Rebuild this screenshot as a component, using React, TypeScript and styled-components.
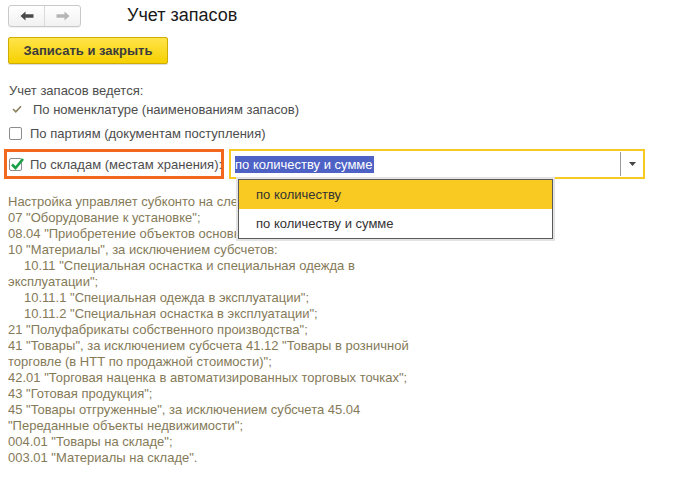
import React from "react";
import styled, { createGlobalStyle } from "styled-components";

const Global = createGlobalStyle`
  html, body { margin: 0; padding: 0; background: #fff; }
  body { font-family: "Liberation Sans", Arial, sans-serif; font-size: 13px; color: #4d4d4d; }
`;

const Page = styled.div`
  display: flex;
  flex-direction: column;
  padding: 4px 0 0 8px;
  width: 692px;
  height: 479px;
  box-sizing: border-box;
`;

const Header = styled.div`
  display: flex;
  align-items: center;
  height: 23px;
`;

const NavGroup = styled.div`
  display: flex;
  width: 73px;
  height: 22px;
  box-sizing: border-box;
  border: 1px solid #c9c9c9;
  border-radius: 3px;
  background: linear-gradient(#ffffff, #f1f1f1);
  box-shadow: 0 1px 1px rgba(0, 0, 0, 0.06);
`;

const NavButton = styled.div<{ $divider?: boolean }>`
  flex: 1;
  display: flex;
  align-items: center;
  justify-content: center;
  border-left: ${(p) => (p.$divider ? "1px solid #dadada" : "none")};
`;

const Title = styled.div`
  margin-left: 46px;
  font-size: 18px;
  color: #1a1a1a;
  line-height: 22px;
  margin-top: -2px;
`;

const SaveButton = styled.button`
  margin-top: 10px;
  width: 160px;
  height: 27px;
  box-sizing: border-box;
  border: 1px solid #cfac00;
  border-radius: 2px;
  background: linear-gradient(#ffe44a, #f6d000);
  font-family: "Liberation Sans", Arial, sans-serif;
  font-size: 13px;
  font-weight: bold;
  color: #3b3b3b;
  padding: 0;
  box-shadow: 0 1px 1px rgba(0, 0, 0, 0.15);
`;

const Caption = styled.div`
  margin-top: 19px;
  line-height: 16px;
  padding-left: 1px;
`;

const OptionRow = styled.div<{ $indent: number }>`
  display: flex;
  align-items: center;
  height: 24px;
  padding-left: ${(p) => p.$indent}px;
  white-space: nowrap;
`;

const MarkSlot = styled.div<{ $w: number }>`
  width: ${(p) => p.$w}px;
  flex-shrink: 0;
  display: flex;
  align-items: center;
`;

const Box = styled.div`
  position: relative;
  width: 13px;
  height: 13px;
  box-sizing: border-box;
  border: 1px solid #8c8c8c;
  border-radius: 2px;
  background: #fff;
`;

const CheckOverlay = styled.svg`
  position: absolute;
  left: 0px;
  top: -2px;
`;

const FieldRow = styled.div`
  position: relative;
  display: flex;
  align-items: center;
  margin-top: 4px;
  margin-left: -4px;
  height: 30px;
`;

const Highlight = styled.div`
  display: flex;
  align-items: center;
  flex-shrink: 0;
  width: 220px;
  height: 30px;
  box-sizing: border-box;
  border: 3px solid #f4671f;
  padding-left: 2px;
  white-space: nowrap;
`;

const Input = styled.div`
  margin-left: 5px;
  width: 416px;
  flex-shrink: 0;
  height: 30px;
  box-sizing: border-box;
  border: 2px solid #f8c91f;
  display: flex;
  align-items: center;
  padding-left: 4px;
`;

const Selected = styled.span`
  background: #4e62c6;
  color: #fff;
  line-height: 17px;
  padding-right: 1px;
`;

const Spacer = styled.div`
  flex: 1;
`;

const Divider = styled.div`
  width: 1px;
  height: 24px;
  background: #9a9a9a;
`;

const ArrowCell = styled.div`
  width: 22px;
  display: flex;
  justify-content: center;
  align-items: center;
`;

const Popup = styled.div`
  position: absolute;
  left: 232px;
  top: 28px;
  width: 319px;
  box-sizing: border-box;
  border: 2px solid #e3e3e3;
  z-index: 2;
`;

const PopupInner = styled.div`
  border: 1px solid #5b5b5b;
  background: #fff;
`;

const PopupItem = styled.div<{ $active?: boolean }>`
  height: 29px;
  display: flex;
  align-items: center;
  padding-left: 17px;
  color: #333;
  background: ${(p) => (p.$active ? "#f9cb22" : "#fff")};
`;

const Note = styled.div`
  margin-top: 15px;
  line-height: 16px;
  color: #857a58;
`;

const Line = styled.div<{ $indent?: boolean }>`
  padding-left: ${(p) => (p.$indent ? "16px" : "0")};
  white-space: pre;
`;

const Arrow = ({ dir, color }: { dir: "left" | "right"; color: string }) => (
  <svg width="14" height="10" viewBox="0 0 14 10">
    <g transform={dir === "right" ? "translate(14,0) scale(-1,1)" : undefined}>
      <path d="M0.5 5 L5.5 0.5 L5.5 3.3 L13.5 3.3 L13.5 6.7 L5.5 6.7 L5.5 9.5 Z" fill={color} />
    </g>
  </svg>
);

export default function App() {
  return (
    <>
      <Global />
      <Page>
        <Header>
          <NavGroup>
            <NavButton>
              <Arrow dir="left" color="#4a4a4a" />
            </NavButton>
            <NavButton $divider>
              <Arrow dir="right" color="#b5b5b5" />
            </NavButton>
          </NavGroup>
          <Title>Учет запасов</Title>
        </Header>

        <SaveButton>Записать и закрыть</SaveButton>

        <Caption>Учет запасов ведется:</Caption>

        <OptionRow $indent={4} style={{ marginTop: -2 }}>
          <MarkSlot $w={21}>
            <svg width="10" height="8" viewBox="0 0 10 8">
              <path d="M1 4 L3.8 6.8 L9 1.2" stroke="#8a7f5c" strokeWidth="1.6" fill="none" />
            </svg>
          </MarkSlot>
          По номенклатуре (наименованиям запасов)
        </OptionRow>

        <OptionRow $indent={1}>
          <MarkSlot $w={21}>
            <Box />
          </MarkSlot>
          По партиям (документам поступления)
        </OptionRow>

        <FieldRow>
          <Highlight>
            <MarkSlot $w={21}>
              <Box>
                <CheckOverlay width="15" height="14" viewBox="0 0 15 14">
                  <path d="M2 7.5 L5.5 11 L13 2" stroke="#17a046" strokeWidth="2.6" fill="none" />
                </CheckOverlay>
              </Box>
            </MarkSlot>
            По складам (местам хранения):
          </Highlight>
          <Input>
            <Selected>по количеству и сумме</Selected>
            <Spacer />
            <Divider />
            <ArrowCell>
              <svg width="7" height="4" viewBox="0 0 7 4">
                <path d="M0 0 L7 0 L3.5 4 Z" fill="#444" />
              </svg>
            </ArrowCell>
          </Input>
          <Popup>
            <PopupInner>
              <PopupItem $active>по количеству</PopupItem>
              <PopupItem>по количеству и сумме</PopupItem>
            </PopupInner>
          </Popup>
        </FieldRow>

        <Note>
          <Line>Настройка управляет субконто на следующих счетах:</Line>
          <Line>07 "Оборудование к установке";</Line>
          <Line>08.04 "Приобретение объектов основных средств";</Line>
          <Line>10 "Материалы", за исключением субсчетов:</Line>
          <Line $indent>10.11 "Специальная оснастка и специальная одежда в</Line>
          <Line>эксплуатации";</Line>
          <Line $indent>10.11.1 "Специальная одежда в эксплуатации";</Line>
          <Line $indent>10.11.2 "Специальная оснастка в эксплуатации";</Line>
          <Line>21 "Полуфабрикаты собственного производства";</Line>
          <Line>41 "Товары", за исключением субсчета 41.12 "Товары в розничной</Line>
          <Line>торговле (в НТТ по продажной стоимости)";</Line>
          <Line>42.01 "Торговая наценка в автоматизированных торговых точках";</Line>
          <Line>43 "Готовая продукция";</Line>
          <Line>45 "Товары отгруженные", за исключением субсчета 45.04</Line>
          <Line>"Переданные объекты недвижимости";</Line>
          <Line>004.01 "Товары на складе";</Line>
          <Line>003.01 "Материалы на складе".</Line>
        </Note>
      </Page>
    </>
  );
}
